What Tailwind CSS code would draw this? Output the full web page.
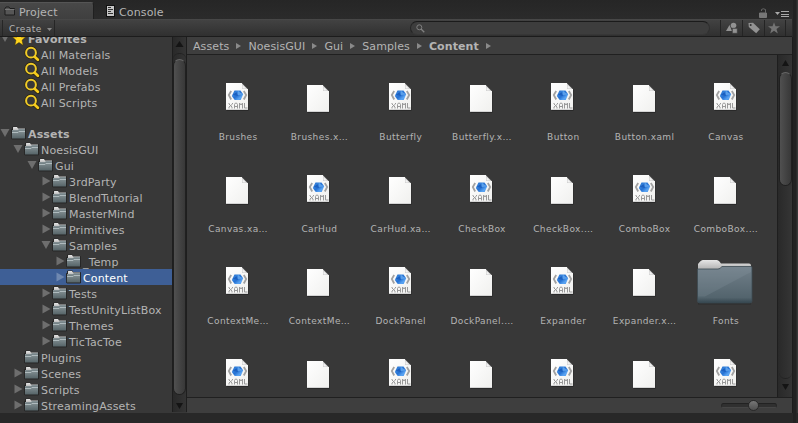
<!DOCTYPE html>
<html lang="en">
<head>
<meta charset="utf-8">
<title>Project</title>
<script src="https://cdn.jsdelivr.net/npm/@tailwindcss/browser@4"></script>
</head>
<body class="w-[798px] h-[423px] overflow-hidden bg-[#282828] font-['DejaVu_Sans',sans-serif] text-[11px] leading-4 text-[#b4b4b4] tracking-[0.15px]">
<svg width="0" height="0" class="absolute">
  <defs>
    <linearGradient id="fg" x1="0" y1="0" x2="0" y2="1"><stop offset="0" stop-color="#8e9a9d"/><stop offset="1" stop-color="#566468"/></linearGradient>
    <linearGradient id="bf" x1="0" y1="0" x2="0" y2="1"><stop offset="0" stop-color="#72808a"/><stop offset=".85" stop-color="#53646d"/><stop offset="1" stop-color="#34464f"/></linearGradient>
    <linearGradient id="tab" x1="0" y1="0" x2="0" y2="1"><stop offset="0" stop-color="#e6e6e6"/><stop offset="1" stop-color="#a8a8a8"/></linearGradient>
    <linearGradient id="pg" x1="0" y1="0" x2="1" y2="1"><stop offset="0" stop-color="#fff"/><stop offset="1" stop-color="#f0f0ee"/></linearGradient>
    <linearGradient id="gem" x1="0" y1="0" x2="1" y2="1"><stop offset="0" stop-color="#1261c4"/><stop offset=".3" stop-color="#3b87df"/><stop offset=".5" stop-color="#2470d2"/><stop offset=".75" stop-color="#5aa4f2"/><stop offset="1" stop-color="#3c8cea"/></linearGradient>
    <symbol id="folder" viewBox="0 0 16 14">
      <path d="M.5 3.500h1V1h5v1.500h8v10.500H.8z" fill="#222" stroke="#262626"/>
      <path d="M2 1.500Q2 1 2.500 1H6L7 2.500H14V6H2z" fill="url(#tab)"/>
      <path d="M1 4h6l1-1H14v9.500H1z" fill="url(#fg)"/>
      <path d="M1 6.500h6l1-1h6" fill="none" stroke="#b4c0c3" stroke-width=".9"/><path d="M1 5.300h5.500l1-1H14" fill="none" stroke="#6b7a7f" stroke-width=".7"/>
    </symbol>
    <symbol id="mag" viewBox="0 0 16 16">
      <path d="M10.500 10.500l3.500 3.500" stroke="#2b2410" stroke-width="4" stroke-linecap="round"/>
      <circle cx="7" cy="6.700" r="4.900" fill="none" stroke="#2b2410" stroke-width="3.400"/>
      <circle cx="7" cy="6.700" r="4.900" fill="#383838" stroke="#f0cb28" stroke-width="2"/>
      <path d="M10.700 10.700l3.200 3.100" stroke="#f6cc1d" stroke-width="2.700" stroke-linecap="round"/>
    </symbol>
    <symbol id="page" viewBox="0 0 24 29">
      <path d="M1.500 1.500h17l5 5v21.500h-22z" fill="#222" opacity=".65"/>
      <path d="M1 0H17L23 6V27H1z" fill="url(#pg)"/>
      <path d="M17 0v6h6z" fill="#c9c9c9"/><path d="M17 0l6 6" stroke="#555" stroke-width="1"/><path d="M17.500 2v3.500H21z" fill="#f3f3f3"/>
      <path d="M1 26.500h22" stroke="#d4d4d4"/>
    </symbol>
    <symbol id="xaml" viewBox="0 0 24 29">
      <use href="#page" width="24" height="29"/>
      <path d="M6.200 8L3.800 12l2.400 4.500M18.800 8l2.400 4-2.400 4.500" fill="none" stroke="#a2a2a2" stroke-width="1.800"/>
      <path d="M9.500 7.500h6l2.700 3.800-2.500 5.700H9.700L6.800 13z" fill="url(#gem)"/>
      <path d="M13 8l4.500 3.300-5 1z" fill="#7dbcf8" opacity=".6"/><path d="M7.500 12l4-3 1.500 4z" fill="#1c60c0"/>
      <g fill="none" stroke="#999"><path d="M4 20v1l3 3v1.500M7.500 20v1l-3.500 3v1.500M9.500 25.500v-4l1-1.500h1l1 1.500v4M9.500 23.500h3M14.500 25.500v-5.500l1.500 2 1.500-2v5.500M19.500 20v5h3"/></g>
    </symbol>
    <symbol id="bigfolder" viewBox="0 0 58 46">
      <path d="M2 44.500h53" stroke="#222" stroke-width="2" opacity=".5"/>
      <path d="M2 12V5Q5 1 7 1H21q2 0 4 3.500H53q2 0 2 2V12z" fill="url(#tab)"/>
      <path d="M1.500 10H22q2 0 4-2.500H55q1 0 1 1V42q0 2-2 2H3.500q-2 0-2-2z" fill="url(#bf)" stroke="#3e4b53" stroke-width=".8"/>
      <path d="M2 10.500H22q2 0 4-2.500H55V13L9 37.500H2z" fill="#91a0a8" opacity=".2"/>
    </symbol>
  </defs>
</svg>
<div class="flex h-[413px]">
  <div class="w-[793px] flex flex-col">
    <!-- tabs -->
    <div class="h-[19px] flex pt-[2px] bg-gradient-to-b from-[#262626] to-[#2b2b2b]">
      <div class="w-[94px] h-[17px] flex items-center rounded-tr-[3px] border-t border-r border-t-[#555] border-r-[#202020] bg-gradient-to-b from-[#484848] to-[#3f3f3f] pl-[4px]">
        <svg width="12" height="10" viewBox="0 0 12 10" class="shrink-0 -mt-px"><path d="M1 9V2.500L2 1h3l1 1.500h4.500V9z" fill="#565656" stroke="#1d1d1d"/><path d="M1 3.500h9.500" stroke="#777"/></svg>
        <span class="ml-[3px] mt-[4px]">Project</span>
      </div>
      <div class="flex items-center pl-[12px]">
        <svg width="9" height="12" viewBox="0 0 9 12"><path d="M0 0h9v12H0z" fill="#111"/><path d="M1 1h7v10H1z" fill="#c6c6c6"/><path d="M2 2.500h3M2 4.500h5M2 6.500h3M2 8.500h5" stroke="#333"/></svg>
        <span class="ml-[4px] mt-[5px]">Console</span>
      </div>
      <div class="ml-auto flex items-center gap-[6px] pr-[4px] pt-[5px]">
        <svg width="8" height="10" viewBox="0 0 8 10" class="mr-px"><path d="M.5 5h7v4.500h-7z" fill="#777" stroke="#777"/><path d="M2.500 3V1.500Q4 0 6.500 1.500V5" fill="none" stroke="#666"/></svg>
        <svg width="15" height="8" viewBox="0 0 15 8" class="mt-[2px]"><path d="M1 2h5L3.500 5z" fill="#aaa"/><path d="M7 1.500h8M7 4.500h8M7 6.500h8" stroke="#aaa"/></svg>
      </div>
    </div>
    <!-- toolbar -->
    <div class="h-[18px] flex items-center w-[792px] bg-gradient-to-b from-[#424242] to-[#303030] border-t border-b border-t-[#474747] border-b-[#1c1c1c] text-[9px]">
      <div class="ml-[2px] w-[53px] h-full border-l border-r border-[#262626] flex items-center pl-[6px] tracking-[0.5px]">
        <span class="mt-[2px]">Create</span>
        <svg width="5" height="3" viewBox="0 0 5 3" class="ml-[5px] mt-[2px]"><path d="M0 0h5L2.500 3z" fill="#888"/></svg>
      </div>
      <div class="ml-[355px] w-[300px] h-[14px] rounded-full bg-[#3d3d3d] border border-t-[#1b1b1b] border-l-[#252525] border-r-[#303030] border-b-[#373737] flex items-center pl-[5px]">
        <svg width="9" height="9" viewBox="0 0 9 9"><circle cx="3.300" cy="3.300" r="2.500" fill="none" stroke="#808080"/><path d="M5 5l3.300 3.300" stroke="#808080" stroke-width="1.300"/></svg>
      </div>
      <div class="ml-[10px] w-[22px] h-full border-l border-[#242424] flex items-center justify-center"><svg width="12" height="12" viewBox="0 0 12 12" fill="#929292"><path d="M0 9l3.500-6L6 9z"/><circle cx="7.500" cy="3.500" r="2.800"/><path d="M6.300 6.300h5v5h-5z" stroke="#393939" stroke-width=".7"/></svg></div>
      <div class="w-[22px] h-full border-l border-[#242424] flex items-center justify-center"><svg width="12" height="12" viewBox="0 0 12 12"><path d="M.5 1L5 .8l6.800 6.500-3.600 4L.8 5z" fill="#929292"/><circle cx="2.700" cy="2.900" r="1" fill="#333"/></svg></div>
      <div class="w-[22px] h-full border-l border-r border-[#242424] flex items-center justify-center pr-[2px]"><svg width="12" height="12" viewBox="0 0 12 12"><path d="M6 .3l1.500 4H12L8.500 7l1.300 4.500L6 8.700l-3.800 2.800L3.500 7 0 4.300h4.500z" fill="#747474"/></svg></div>
    </div>
    <div class="flex h-[376px] bg-[#383838] border-r border-[#1c1c1c]">
      <!-- tree -->
      <div id="tree" class="w-[172px] h-[375px] overflow-hidden"></div>
      <div class="w-[15px] h-[375px] border-l border-r border-[#1e1e1e] bg-gradient-to-r from-[#292929] to-[#343434] flex flex-col items-center">
        <svg width="9" height="6" viewBox="0 0 9 6" class="mt-[4px]"><path d="M4.500 0L8.500 6H.5z" fill="#141414"/></svg>
        <div class="mt-[6px] w-[13px] h-[6px] rounded-t-full border-t border-[#222]"></div>
        <div class="w-[13px] h-[336px] rounded-full border border-[#202020] border-t-[#666] bg-gradient-to-r from-[#505050] to-[#383838]"></div>
        <svg width="7" height="6" viewBox="0 0 7 6" class="mt-[8px]"><path d="M0 0h7L3.500 6z" fill="#141414"/></svg>
      </div>
      <!-- content -->
      <div class="w-[605px] h-[376px] flex flex-col">
        <div class="h-[18px] shrink-0 bg-[#3e3e3e] border-b border-[#202020] flex items-center pl-[6px] whitespace-pre tracking-[0.1px]" id="crumbs"></div>
        <div class="h-[342px] flex">
          <div class="w-[590px] overflow-hidden"><div id="grid" class="grid grid-cols-[repeat(7,81.3px)] auto-rows-[92px] pl-[9.500px] pt-[28px] text-[9px] tracking-[0.4px]"></div></div>
          <div class="w-[15px] h-full border-l border-[#1e1e1e] bg-gradient-to-r from-[#292929] to-[#343434] flex flex-col items-center">
            <svg width="7" height="6" viewBox="0 0 7 6" class="mt-[5px]"><path d="M3.500 0L7 6H0z" fill="#141414"/></svg>
            <div class="mt-[6px] w-[13px] h-[114px] shrink-0 rounded-full border border-[#202020] border-t-[#666] bg-gradient-to-r from-[#505050] to-[#383838]"></div>
            <div class="w-[13px] h-[193px] rounded-b-full border-b border-[#222] bg-gradient-to-r from-[#2a2a2a] to-[#353535]"></div>
            <svg width="7" height="6" viewBox="0 0 7 6" class="mt-[5px]"><path d="M0 0h7L3.500 6z" fill="#141414"/></svg>
          </div>
        </div>
        <div class="h-[16px] shrink-0 border-t border-[#202020] bg-[#3e3e3e] flex items-center justify-end pr-[15px]">
          <div class="w-[56px] h-[5px] rounded-full bg-[#303030] border border-t-[#222] border-x-[#292929] border-b-[#464646] flex items-center pl-[26px]">
            <div class="w-[11px] h-[11px] shrink-0 rounded-full border border-[#292929] bg-gradient-to-b from-[#777] to-[#505050]"></div>
          </div>
        </div>
      </div>
    </div>
  </div>
  <div class="w-[3px] h-[423px] bg-[#222]"></div>
  <div class="w-[2px] h-[413px] bg-[#383838] border-l border-[#2b2b2b]"></div>
</div>
<script>
const svg = (id, w, h, c) => `<svg width="${w}" height="${h}" class="${c}"><use href="#${id}"/></svg>`;
const open = '<svg width="10" height="8" viewBox="0 0 10 8" class="shrink-0"><path d="M.5 0h9L5 8z" fill="#6e6e6e"/></svg>';
const shut = '<svg width="10" height="10" viewBox="0 0 10 10" class="shrink-0"><path d="M1.500 .5L9.500 5l-8 4.500z" fill="currentColor"/></svg>';
const star = '<svg width="14" height="14" viewBox="0 0 14 14" class="shrink-0 mt-px"><path d="M7 .5l2 4.500h4.500L10 8.300l1.200 5L7 10.500l-4.200 2.800L4 8.300.5 5H5z" fill="#ffd51e" stroke="#463708" stroke-width=".5"/></svg>';
// [label, depth, arrow, icon]
const rows = [["Favorites",0,"o","s"],["All Materials",1,"","m"],["All Models",1,"","m"],["All Prefabs",1,"","m"],["All Scripts",1,"","m"],null,
["Assets",0,"o","f"],["NoesisGUI",1,"o","f"],["Gui",2,"o","f"],["3rdParty",3,"c","f"],["BlendTutorial",3,"c","f"],["MasterMind",3,"c","f"],["Primitives",3,"c","f"],["Samples",3,"o","f"],["_Temp",4,"c","f"],["Content",4,"c","f"],["Tests",3,"c","f"],["TestUnityListBox",3,"c","f"],["Themes",3,"c","f"],["TicTacToe",3,"c","f"],["Plugins",1,"","f"],["Scenes",1,"c","f"],["Scripts",1,"c","f"],["StreamingAssets",1,"c","f"]];
document.getElementById('tree').innerHTML = '<div class="-mt-[7px]">' + rows.map(r => {
  if (!r) return '<div class="h-[15px]"></div>';
  const [t, d, a, i] = r, sel = t === 'Content';
  const arrow = a === 'o' ? open : a === 'c' ? shut : '<span class="w-[10px] shrink-0"></span>';
  const icon = i === 's' ? star : i === 'm' ? svg('mag',16,16,'shrink-0 -ml-px -mr-px') : svg('folder',16,14,'shrink-0 -ml-px -mr-px -mt-px');
  return `<div class="h-[16px] flex items-center whitespace-nowrap ${sel ? 'bg-[#3e5f96] text-[#6f88b0]' : 'text-[#6e6e6e]'}" style="padding-left:${d*14-1}px">${arrow}<span class="w-[2px] shrink-0"></span>${icon}<span class="ml-[2px] mt-[4px] ${sel ? 'text-white' : 'text-[#b4b4b4]'} ${d ? '' : 'font-bold'}">${t}</span></div>`;
}).join('') + '</div>';
document.getElementById('crumbs').innerHTML = ["Assets","NoesisGUI","Gui","Samples","Content"].map((t,i) =>
  `<span class="mt-[3px] ${i===4 ? 'font-bold' : ''}">${t}</span><svg width="5" height="6" viewBox="0 0 5 6" class="ml-[7px] mr-[7px] mt-px"><path d="M0 0l5 3-5 3z" fill="#8a8a8a"/></svg>`).join('');
const items = ["Brushes","Brushes.x…","Butterfly","Butterfly.x…","Button","Button.xaml","Canvas","Canvas.xa…","CarHud","CarHud.xa…","CheckBox","CheckBox.…","ComboBox","ComboBox.…","ContextMe…","ContextMe…","DockPanel","DockPanel.…","Expander","Expander.x…","Fonts","","","","","","",""];
document.getElementById('grid').innerHTML = items.map((t,i) => {
  const kind = i === 20 ? 'b' : i > 20 ? ((i-21)%2 ? 'p' : 'x') : (i%2 ? 'p' : 'x');
  const icon = kind === 'b' ? svg('bigfolder',58,46,'-mt-[8px] ml-px') : kind === 'x' ? svg('xaml',24,29,'') : svg('page',24,29,'mt-[2px]');
  return `<div class="flex flex-col items-center"><div class="h-[46px] flex items-start">${icon}</div><span class="h-[16px] pl-[2px] whitespace-nowrap">${t}</span></div>`;
}).join('');
</script>
</body>
</html>
